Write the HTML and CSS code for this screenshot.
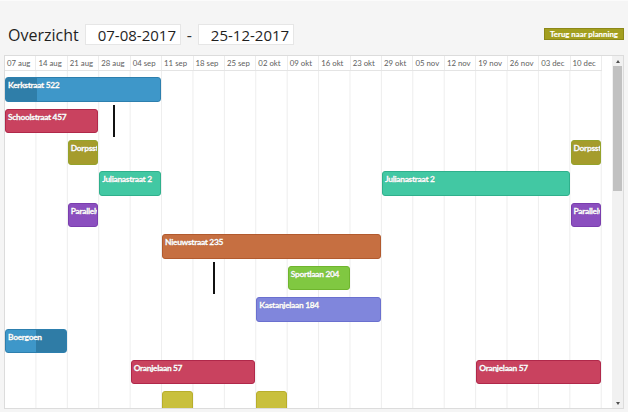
FILE: index.html
```html
<!DOCTYPE html>
<html lang="nl">
<head>
<meta charset="utf-8">
<title>Overzicht</title>
<link rel="stylesheet" href="styles.css">
</head>
<body>
<div class="page">
  <div class="topbar">
    <div class="range">
      <span class="title">Overzicht</span>
      <span class="datebox">07-08-2017</span>
      <span class="dash">-</span>
      <span class="datebox">25-12-2017</span>
    </div>
    <button class="back">Terug naar planning</button>
  </div>

  <div class="panel">
    <div class="gantt">
      <div class="head">
        <div class="hcell">07 aug</div><div class="hcell">14 aug</div><div class="hcell">21 aug</div><div class="hcell">28 aug</div>
        <div class="hcell">04 sep</div><div class="hcell">11 sep</div><div class="hcell">18 sep</div><div class="hcell">25 sep</div>
        <div class="hcell">02 okt</div><div class="hcell">09 okt</div><div class="hcell">16 okt</div><div class="hcell">23 okt</div>
        <div class="hcell">29 okt</div><div class="hcell">05 nov</div><div class="hcell">12 nov</div><div class="hcell">19 nov</div>
        <div class="hcell">26 nov</div><div class="hcell">03 dec</div><div class="hcell">10 dec</div>
      </div>
      <div class="body">
        <div class="row">
          <div class="bar blue progress-start" style="grid-column: 1 / 6">Kerkstraat 522</div>
        </div>
        <div class="row">
          <div class="bar crimson" style="grid-column: 1 / 4">Schoolstraat 457</div>
          <div class="marker marker-a" style="grid-column: 4 / 5"></div>
        </div>
        <div class="row">
          <div class="bar olive" style="grid-column: 3 / 4">Dorpsstraat</div>
          <div class="bar olive" style="grid-column: 19 / 20">Dorpsstraat</div>
        </div>
        <div class="row">
          <div class="bar teal" style="grid-column: 4 / 6">Julianastraat 2</div>
          <div class="bar teal" style="grid-column: 13 / 19">Julianastraat 2</div>
        </div>
        <div class="row">
          <div class="bar purple" style="grid-column: 3 / 4">Parallelweg</div>
          <div class="bar purple" style="grid-column: 19 / 20">Parallelweg</div>
        </div>
        <div class="row">
          <div class="bar orange" style="grid-column: 6 / 13">Nieuwstraat 235</div>
        </div>
        <div class="row">
          <div class="marker marker-b" style="grid-column: 7 / 8"></div>
          <div class="bar green" style="grid-column: 10 / 12">Sportlaan 204</div>
        </div>
        <div class="row">
          <div class="bar lavender" style="grid-column: 9 / 13">Kastanjelaan 184</div>
        </div>
        <div class="row">
          <div class="bar blue progress-end" style="grid-column: 1 / 3">Boergoen</div>
        </div>
        <div class="row">
          <div class="bar crimson" style="grid-column: 5 / 9">Oranjelaan 57</div>
          <div class="bar crimson" style="grid-column: 16 / 20">Oranjelaan 57</div>
        </div>
        <div class="row">
          <div class="bar yellow" style="grid-column: 6 / 7"></div>
          <div class="bar yellow" style="grid-column: 9 / 10"></div>
        </div>
        <div class="row"></div>
      </div>
    </div>
    <div class="scrollbar">
      <div class="sb-btn"><span class="arrow-up"></span></div>
      <div class="sb-track"><div class="sb-thumb"></div></div>
      <div class="sb-btn"><span class="arrow-down"></span></div>
    </div>
  </div>
</div>
</body>
</html>
```

FILE: styles.css
```css
* { box-sizing: border-box; }

html, body {
  margin: 0;
  padding: 0;
}

body {
  background: #f5f5f5;
  font-family: "Open Sans", "Liberation Sans", sans-serif;
  color: #222;
  width: 628px;
  height: 412px;
  overflow: hidden;
}

.page {
  padding: 0 4px;
  border-top: 1px solid #fbfbfb;
}

.topbar {
  display: flex;
  align-items: flex-start;
  justify-content: space-between;
  padding-top: 23px;
  height: 54px;
}

.range {
  display: flex;
  align-items: center;
  height: 21px;
  white-space: nowrap;
}

.title {
  font-size: 16px;
  margin-left: 4px;
  margin-right: 6px;
  color: #1f1f1f;
}

.datebox {
  display: flex;
  align-items: center;
  width: 96px;
  height: 21px;
  padding-left: 12px;
  background: #fff;
  border: 1px solid #e6e6e6;
  font-size: 15px;
  color: #1f1f1f;
  white-space: nowrap;
  overflow: hidden;
}

.dash {
  font-size: 16px;
  margin: 0 6px;
  color: #333;
}

.back {
  margin-top: 4px;
  height: 12px;
  width: 80px;
  padding: 0;
  border: 1px solid #8c8818;
  background: #a39f1f;
  color: #fff;
  font-family: "Lato", "Liberation Sans", sans-serif;
  font-weight: 700;
  font-size: 7.8px;
  line-height: 10px;
  text-align: center;
  white-space: nowrap;
  -webkit-text-stroke: 0.15px #fff;
}

.panel {
  display: flex;
  height: 354px;
  background: #fff;
  border: 1px solid #dcdcdc;
}

.gantt {
  width: 607px;
  overflow: hidden;
}

.head {
  display: grid;
  grid-template-columns: repeat(19, 1fr);
  width: 597px;
  height: 15px;
  border-bottom: 1px solid #e4e4e4;
}

.hcell {
  font-family: "Lato", "Liberation Sans", sans-serif;
  font-size: 7.8px;
  color: #5e5e5e;
  line-height: 14px;
  padding-left: 2px;
  border-right: 1px solid #ececec;
  white-space: nowrap;
  overflow: hidden;
}

.body {
  width: 597px;
  padding-top: 2.8px;
  background-image: linear-gradient(to left, #ededed 1px, transparent 1px);
  background-size: calc(100% / 19) 100%;
  height: 400px;
}

.row {
  display: grid;
  grid-template-columns: repeat(19, 1fr);
  height: 31.42px;
  align-items: center;
}

.bar {
  grid-row: 1;
  height: 24.5px;
  margin-right: 1px;
  border-radius: 3px;
  border: 1px solid;
  color: #fff;
  font-family: "Lato", "Liberation Sans", sans-serif;
  font-weight: 700;
  font-size: 8.4px;
  letter-spacing: -0.3px;
  line-height: 10px;
  padding: 2px 0 0 2px;
  white-space: nowrap;
  overflow: hidden;
  -webkit-text-stroke: 0.3px #fff;
  text-shadow: 0 0 1px rgba(0, 0, 0, 0.4);
}

.blue { background: #3e97c9; border-color: #2d7fae; }
.progress-start { background: linear-gradient(to right, #2f7ea9 20%, #3e97c9 20%); }
.progress-end { background: linear-gradient(to right, #3e97c9 50%, #2f7ca6 50%); }
.crimson { background: #c9425f; border-color: #b0284a; }
.olive { background: #a59c2c; border-color: #95a32b; }
.teal { background: #42c8a3; border-color: #2fb08c; }
.purple { background: #8b4fbf; border-color: #7a3eae; }
.orange { background: #c66f41; border-color: #b25a2e; }
.green { background: #80c841; border-color: #6fb52e; }
.lavender { background: #8086dc; border-color: #6a70cf; }
.yellow { background: #c9c03d; border-color: #b8ae2c; }

.marker {
  grid-row: 1;
  align-self: stretch;
  width: 2px;
  background: #111;
}

.marker-a { margin-left: 14px; }
.marker-b { margin-left: 19px; }

.scrollbar {
  width: 11px;
  margin-left: 5px;
  display: flex;
  flex-direction: column;
  background: #f1f1f1;
}

.sb-btn {
  height: 10px;
  display: flex;
  align-items: center;
  justify-content: center;
}

.arrow-up {
  width: 0;
  height: 0;
  border-left: 2.5px solid transparent;
  border-right: 2.5px solid transparent;
  border-bottom: 3px solid #505050;
}

.arrow-down {
  width: 0;
  height: 0;
  border-left: 2.5px solid transparent;
  border-right: 2.5px solid transparent;
  border-top: 3px solid #505050;
}

.sb-track {
  flex: 1;
  padding: 0 1px;
}

.sb-thumb {
  height: 125px;
  background: #c1c1c1;
}
```
